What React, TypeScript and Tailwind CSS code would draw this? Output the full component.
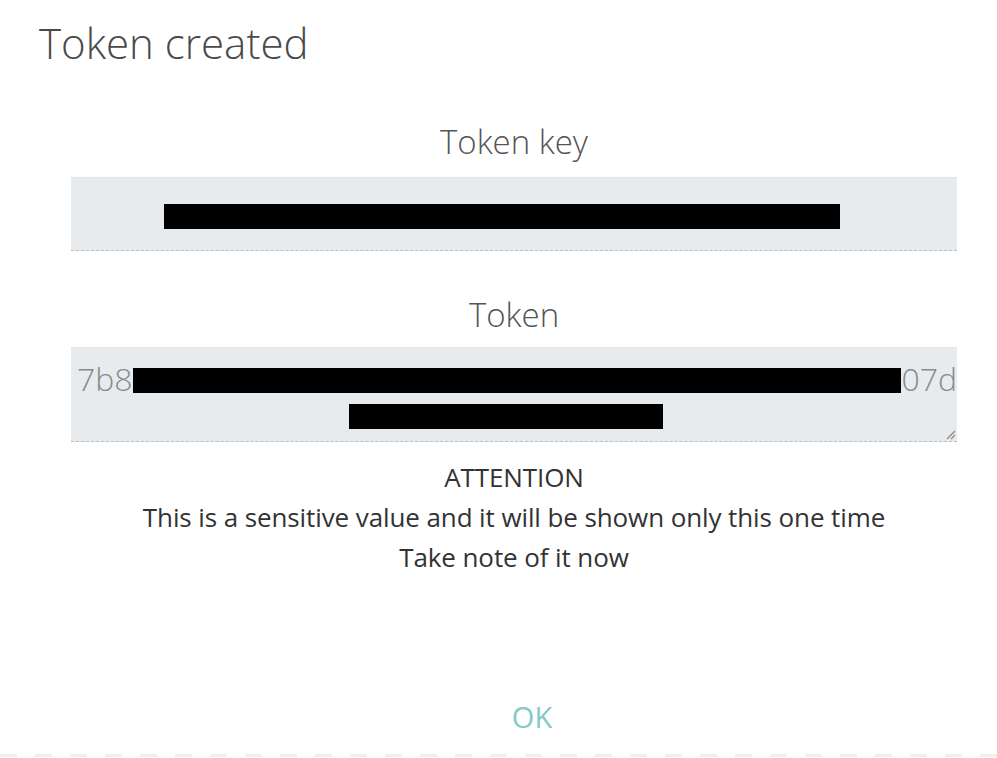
import React from "react";

const font = { fontFamily: '"Open Sans", "Noto Sans", sans-serif' };

function Redacted({ w }: { w: string }) {
  return <span className={`inline-block h-[25px] bg-black ${w}`} />;
}

export default function App() {
  return (
    <div className="relative h-[758px] w-[997px] overflow-hidden bg-white" style={font}>
      <h1 className="pl-[39px] pt-[16px] text-[42px] font-light leading-[54px] text-[#4a4a4a]">
        Token created
      </h1>

      <div className="ml-[71px] mt-[50px] w-[886px]">
        <div className="text-center text-[33px] font-light leading-[44px] text-[#555]">Token key</div>
        <div className="mt-[13px] flex h-[74px] items-center justify-center border-t border-dotted border-t-[#dcdfe2] border-b border-b-[#bdbdbd] bg-[#e8ebee] [border-bottom-style:dashed]">
          <span className="ml-[-24px] mt-[4px] flex">
            <Redacted w="w-[676px]" />
          </span>
        </div>

        <div className="mt-[42px] text-center text-[33px] font-light leading-[44px] text-[#555]">Token</div>
        <div className="relative mt-[10px] h-[95px] border-t border-dotted border-t-[#dcdfe2] border-b border-b-[#bdbdbd] bg-[#e8ebee] pt-[13px] [border-bottom-style:dashed]">
          <div className="flex h-[32px] items-end pl-[6px] text-[32px] font-light leading-[34px] text-[#8a8a8a]">
            <span className="mb-[-3px]">7b8</span>
            <Redacted w="w-[770px]" />
            <span className="mb-[-3px]">07d</span>
          </div>
          <div className="mt-[11px] flex pl-[278px]">
            <Redacted w="w-[314px]" />
          </div>
          <svg className="absolute bottom-[1px] right-[1px]" width="12" height="12" viewBox="0 0 12 12">
            <path d="M11 3 L3 11 M11 7 L7 11" stroke="#888" strokeWidth="1.2" />
          </svg>
        </div>

        <div className="mt-[15px] text-center text-[26px] leading-[40px] tracking-[-0.1px] text-[#333]">
          <div>ATTENTION</div>
          <div>This is a sensitive value and it will be shown only this one time</div>
          <div>Take note of it now</div>
        </div>

        <div className="mt-[120px] pl-[36px] text-center text-[29px] leading-[40px] text-[#80cbc4]">OK</div>
      </div>

      <div className="absolute bottom-[1px] left-0 right-0 h-[3px] bg-[repeating-linear-gradient(90deg,#efefef_0_17px,transparent_17px_35px)]" />
    </div>
  );
}
